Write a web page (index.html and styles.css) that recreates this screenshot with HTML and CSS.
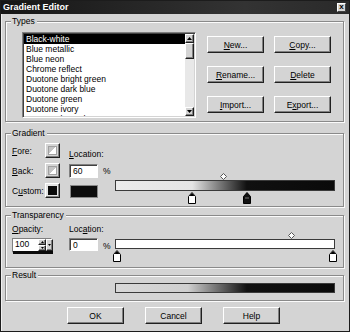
FILE: index.html
```html
<!DOCTYPE html>
<html lang="en">
<head>
    <meta charset="UTF-8">
    <title>Gradient Editor</title>
    <link rel="stylesheet" href="styles.css">
</head>
<body>
    <div class="dialog">
        <div class="titlebar">
            <span class="title">Gradient Editor</span>
            <span class="close">x</span>
        </div>

        <div class="group types">
            <span class="legend">Types</span>
            <div class="listbox">
                <ul class="list">
                    <li class="sel">Black-white</li>
                    <li>Blue metallic</li>
                    <li>Blue neon</li>
                    <li>Chrome reflect</li>
                    <li>Duotone bright green</li>
                    <li>Duotone dark blue</li>
                    <li>Duotone green</li>
                    <li>Duotone ivory</li>
                    <li>Duotone lavender</li>
                </ul>
                <div class="scrollbar">
                    <span class="sb-btn"><svg width="5" height="3" viewBox="0 0 5 3"><path d="M2.5 0 L5 3 H0 Z" fill="#000"/></svg></span>
                    <span class="thumb"></span>
                    <span class="track"></span>
                    <span class="sb-btn"><svg width="5" height="3" viewBox="0 0 5 3"><path d="M0 0 H5 L2.5 3 Z" fill="#000"/></svg></span>
                </div>
            </div>
            <div class="type-buttons">
                <button class="btn"><u>N</u>ew...</button>
                <button class="btn"><u>C</u>opy...</button>
                <button class="btn"><u>R</u>ename...</button>
                <button class="btn"><u>D</u>elete</button>
                <button class="btn"><u>I</u>mport...</button>
                <button class="btn">E<u>x</u>port...</button>
            </div>
        </div>

        <div class="group gradient">
            <span class="legend">Gradient</span>
            <div class="grad-grid">
                <span class="lbl r1"><u>F</u>ore:</span>
                <span class="swatch r1"><span class="swatch-in"></span></span>
                <span class="lbl loc-lbl r1"><u>L</u>ocation:</span>

                <span class="lbl r2"><u>B</u>ack:</span>
                <span class="swatch r2"><span class="swatch-in"></span></span>
                <span class="field loc-field r2">60</span>
                <span class="pct r2">%</span>

                <span class="lbl r3">C<u>u</u>stom:</span>
                <span class="swatch custom r3"><span class="swatch-black"></span></span>
                <span class="custom-color r3"></span>

                <div class="bar-area">
                    <svg class="diamond" style="left:49%" width="7" height="7" viewBox="0 0 7 7"><path d="M3.5 0.5 L6.5 3.5 L3.5 6.5 L0.5 3.5 Z" fill="#fff" stroke="#555"/></svg>
                    <div class="bar bar-grad"></div>
                    <svg class="marker" style="left:35%" width="8" height="12" viewBox="0 0 8 12"><path d="M4 0.5 L7.5 4.5 V11.5 H0.5 V4.5 Z" fill="#fff" stroke="#000"/><path d="M4 1 L6.5 4 H1.5 Z" fill="#000"/></svg>
                    <svg class="marker" style="left:60%" width="8" height="12" viewBox="0 0 8 12"><path d="M4 0.5 L7.5 4.5 V11.5 H0.5 V4.5 Z" fill="#111" stroke="#000"/><path d="M2 6 H6" stroke="#777"/></svg>
                </div>
            </div>
        </div>

        <div class="group transparency">
            <span class="legend">Transparency</span>
            <div class="trans-grid">
                <span class="lbl t-op"><u>O</u>pacity:</span>
                <span class="lbl t-loc">Loc<u>a</u>tion:</span>
                <div class="spinbox">
                    <span class="spin-text">100</span>
                    <span class="spin-btns">
                        <span class="spin-btn"><svg width="3" height="2" viewBox="0 0 3 2"><path d="M1.5 0 L3 2 H0 Z" fill="#000"/></svg></span>
                        <span class="spin-btn"><svg width="3" height="2" viewBox="0 0 3 2"><path d="M0 0 H3 L1.5 2 Z" fill="#000"/></svg></span>
                    </span>
                    <span class="spin-drop"><svg width="3" height="2" viewBox="0 0 3 2"><path d="M0 0 H3 L1.5 2 Z" fill="#000"/></svg></span>
                    <span class="spin-slider"></span>
                </div>
                <span class="field t-field">0</span>
                <span class="pct t-pct">%</span>
                <div class="bar-area t-bar">
                    <svg class="diamond" style="left:80%" width="7" height="7" viewBox="0 0 7 7"><path d="M3.5 0.5 L6.5 3.5 L3.5 6.5 L0.5 3.5 Z" fill="#fff" stroke="#555"/></svg>
                    <div class="bar bar-white"></div>
                    <svg class="marker" style="left:1%" width="8" height="12" viewBox="0 0 8 12"><path d="M4 0.5 L7.5 4.5 V11.5 H0.5 V4.5 Z" fill="#fff" stroke="#000"/><path d="M4 1 L6.5 4 H1.5 Z" fill="#000"/></svg>
                    <svg class="marker" style="left:99%" width="8" height="12" viewBox="0 0 8 12"><path d="M4 0.5 L7.5 4.5 V11.5 H0.5 V4.5 Z" fill="#fff" stroke="#000"/><path d="M4 1 L6.5 4 H1.5 Z" fill="#000"/></svg>
                </div>
            </div>
        </div>

        <div class="group result">
            <span class="legend">Result</span>
            <div class="bar bar-result"></div>
        </div>

        <div class="actions">
            <button class="btn">OK</button>
            <button class="btn">Cancel</button>
            <button class="btn">Help</button>
        </div>
    </div>
</body>
</html>
```
FILE: styles.css
```css
* { box-sizing: border-box; margin: 0; padding: 0; }
body {
    font-family: "Liberation Sans", Arial, sans-serif;
    font-size: 8px;
    color: #000;
    background: #fff;
}
u { text-decoration-thickness: 1px; text-underline-offset: 1px; }

.dialog {
    width: 350px;
    height: 332px;
    background: #d4d4d4;
    border: 1px solid #1c1c1c;
    box-shadow: inset 1px 1px 0 #efefef;
    overflow: hidden;
}
.titlebar {
    height: 13px;
    background: linear-gradient(90deg, #161616, #333 70%, #2a2a2a);
    display: flex;
    align-items: center;
    justify-content: space-between;
    padding: 0 3px 0 2px;
}
.title {
    color: #fff;
    font-weight: bold;
    font-size: 9px;
    line-height: 11px;
}
.close {
    width: 9px;
    height: 9px;
    background: #d4d4d4;
    border: 1px solid;
    border-color: #fff #404040 #404040 #fff;
    font-size: 8px;
    font-weight: bold;
    line-height: 6px;
    text-align: center;
}

/* etched group frames */
.group {
    position: relative;
    margin-left: 4px;
    width: 339px;
    border: 1px solid #8a8a8a;
    box-shadow: 1px 1px 0 #fbfbfb, inset 1px 1px 0 #fbfbfb;
}
.legend {
    position: absolute;
    top: -6px;
    left: 5px;
    padding: 0 2px 0 1px;
    background: #d4d4d4;
    line-height: 10px;
    font-size: 8.5px;
}

/* raised control look */
.btn, .sb-btn, .thumb, .swatch, .spin-btn, .spin-drop {
    background: #d4d4d4;
    border: 1px solid;
    border-color: #fff #202020 #202020 #fff;
    box-shadow: inset -1px -1px 0 #808080;
}
.btn {
    height: 17px;
    font: inherit;
    font-size: 8.5px;
    color: #000;
    cursor: pointer;
}

/* types */
.types {
    margin-top: 7px;
    height: 101px;
    padding: 10px 0 0 16px;
    display: flex;
    align-items: flex-start;
}
.listbox {
    width: 174px;
    height: 86px;
    background: #fff;
    border: 1px solid;
    border-color: #808080 #fff #fff #808080;
    box-shadow: inset 1px 1px 0 #404040, inset -1px -1px 0 #d4d4d4;
    padding: 1px;
    display: flex;
    overflow: hidden;
}
.list {
    list-style: none;
    flex: 1;
    overflow: hidden;
}
.list li {
    height: 10px;
    line-height: 10px;
    padding-left: 2px;
    white-space: nowrap;
    font-size: 8.5px;
}
.list li.sel { background: #000; color: #fff; }
.scrollbar {
    width: 9px;
    display: flex;
    flex-direction: column;
    background: #e8e8e8;
}
.sb-btn {
    height: 9px;
    display: flex;
    align-items: center;
    justify-content: center;
}
.thumb { height: 16px; }
.track { flex: 1; }
.type-buttons {
    margin: 4px 0 0 11px;
    display: grid;
    grid-template-columns: 57px 57px;
    column-gap: 10px;
    row-gap: 13px;
}

/* gradient */
.gradient {
    margin-top: 11px;
    height: 74px;
    padding: 9px 0 0 6px;
}
.grad-grid {
    display: grid;
    grid-template-columns: 33px 15px 9px 29px 17px 220px;
    grid-template-rows: 15px 15px 15px;
    row-gap: 5px;
}
.lbl {
    grid-column: 1;
    align-self: center;
    white-space: nowrap;
    font-size: 8.5px;
}
.r1 { grid-row: 1; }
.r2 { grid-row: 2; }
.r3 { grid-row: 3; }
.swatch {
    grid-column: 2;
    padding: 2px;
    display: flex;
}
.swatch-in {
    flex: 1;
    background: linear-gradient(to bottom right, #c4c4c4 50%, #fff 50%);
    border: 1px solid #a0a0a0;
}
.swatch.custom {
    background: #e4e4e4;
    padding: 2px;
}
.swatch-black { flex: 1; background: #0a0a0a; }
.loc-lbl {
    grid-column: 4 / 6;
    align-self: end;
    margin-bottom: -1px;
}
.field {
    background: #fff;
    border: 1px solid;
    border-color: #808080 #fff #fff #808080;
    box-shadow: inset 1px 1px 0 #404040;
    padding: 2px 0 0 3px;
    font-size: 8.5px;
    line-height: 9px;
}
.loc-field { grid-column: 4; height: 14px; margin-top: 1px; }
.pct {
    align-self: center;
    padding-left: 5px;
    font-size: 8.5px;
}
.r2.pct { grid-column: 5; }
.custom-color {
    grid-column: 4;
    width: 28px;
    height: 13px;
    margin: 2px 0 0 1px;
    background: #0c0c0c;
    border: 1px solid #888;
}
.bar-area {
    grid-column: 6;
    grid-row: 1 / 4;
    position: relative;
    padding-top: 37px;
}
.bar {
    width: 220px;
    height: 11px;
    border: 1px solid #3a3a3a;
}
.bar-grad {
    background: linear-gradient(90deg, #ececec 0%, #e4e4e4 35%, #101010 60%, #0a0a0a 100%);
}
.diamond {
    position: absolute;
    top: 30px;
    margin-left: -3px;
}
.marker {
    position: absolute;
    top: 49px;
    margin-left: -4px;
}

/* transparency */
.transparency {
    margin-top: 8px;
    height: 53px;
    padding: 8px 0 0 6px;
}
.trans-grid {
    display: grid;
    grid-template-columns: 40px 17px 29px 17px 220px;
    grid-template-rows: 9px 15px;
    row-gap: 5px;
}
.t-op { grid-column: 1 / 3; grid-row: 1; }
.t-loc { grid-column: 3 / 5; grid-row: 1; }
.spinbox {
    grid-column: 1;
    grid-row: 2;
    display: grid;
    grid-template-columns: 25px 8px 7px;
    grid-template-rows: 12px 3px;
    border: 1px solid;
    border-color: #808080 #fff #fff #808080;
    background: #fff;
}
.spin-text {
    padding: 1px 0 0 2px;
    font-size: 8.5px;
    line-height: 9px;
}
.spin-btns { display: flex; flex-direction: column; }
.spin-btn {
    flex: 1;
    display: flex;
    align-items: center;
    justify-content: center;
}
.spin-drop {
    display: flex;
    align-items: center;
    justify-content: center;
}
.spin-slider {
    grid-column: 1 / 4;
    background: #0a0a0a;
}
.t-field { grid-column: 3; grid-row: 2; height: 13px; }
.t-pct { grid-column: 4; grid-row: 2; }
.t-bar {
    grid-column: 5;
    grid-row: 1 / 3;
    padding-top: 15px;
}
.t-bar .diamond { top: 8px; }
.t-bar .marker { top: 26px; }
.bar-white { background: #fff; height: 10px; }

/* result */
.result {
    margin-top: 7px;
    height: 26px;
    padding: 7px 0 0 109px;
}
.bar-result {
    height: 10px;
    background: linear-gradient(90deg, #d8d8d8 0%, #cfcfcf 33%, #111 60%, #0a0a0a 100%);
}

.actions {
    margin-top: 6px;
    padding-left: 66px;
    display: flex;
    gap: 21px;
}
.actions .btn { width: 57px; }
```
